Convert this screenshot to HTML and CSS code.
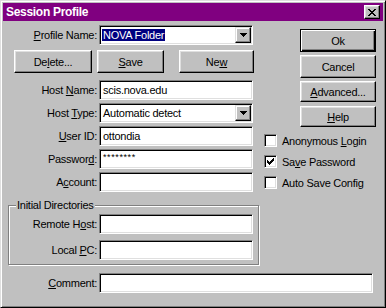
FILE: index.html
```html
<!DOCTYPE html>
<html lang="en">
<head>
    <meta charset="UTF-8">
    <meta name="viewport" content="width=device-width, initial-scale=1.0">
    <title>Session Profile</title>
    <link rel="stylesheet" href="styles.css">
</head>
<body>

    <div class="window">
        <div class="titlebar">
            <span class="title">Session Profile</span>
            <span class="close-btn">
                <svg width="8" height="7" viewBox="0 0 8 7" shape-rendering="crispEdges">
                    <path d="M0 0h2v1h-2z M6 0h2v1h-2z M1 1h2v1h-2z M5 1h2v1h-2z M2 2h4v1h-4z M3 3h2v1h-2z M2 4h4v1h-4z M1 5h2v1h-2z M5 5h2v1h-2z M0 6h2v1h-2z M6 6h2v1h-2z" fill="#000"/>
                </svg>
            </span>
        </div>

        <div class="content">
            <div class="main">
                <div class="left">
                    <div class="row row-profile">
                        <span class="lbl"><u>P</u>rofile Name:</span>
                        <div class="field combo">
                            <span class="field-text"><span class="selected">NOVA Folder</span></span>
                            <span class="drop-btn">
                                <svg width="7" height="4" viewBox="0 0 7 4" shape-rendering="crispEdges">
                                    <path d="M0 0h7v1h-7z M1 1h5v1h-5z M2 2h3v1h-3z M3 3h1v1h-1z" fill="#000"/>
                                </svg>
                            </span>
                        </div>
                    </div>

                    <div class="profile-buttons">
                        <div class="btn btn-delete">De<u>l</u>ete...</div>
                        <div class="btn btn-save"><u>S</u>ave</div>
                        <div class="btn btn-new">Ne<u>w</u></div>
                    </div>

                    <div class="row row-host">
                        <span class="lbl">Host <u>N</u>ame:</span>
                        <div class="field"><span class="field-text">scis.nova.edu</span></div>
                    </div>
                    <div class="row">
                        <span class="lbl">Host <u>T</u>ype:</span>
                        <div class="field combo">
                            <span class="field-text">Automatic detect</span>
                            <span class="drop-btn">
                                <svg width="7" height="4" viewBox="0 0 7 4" shape-rendering="crispEdges">
                                    <path d="M0 0h7v1h-7z M1 1h5v1h-5z M2 2h3v1h-3z M3 3h1v1h-1z" fill="#000"/>
                                </svg>
                            </span>
                        </div>
                    </div>
                    <div class="row">
                        <span class="lbl"><u>U</u>ser ID:</span>
                        <div class="field"><span class="field-text">ottondia</span></div>
                    </div>
                    <div class="row">
                        <span class="lbl">Passwor<u>d</u>:</span>
                        <div class="field field-password"><span class="field-text">********</span></div>
                    </div>
                    <div class="row">
                        <span class="lbl">A<u>c</u>count:</span>
                        <div class="field"></div>
                    </div>

                    <div class="group">
                        <span class="group-title">Initial Directories</span>
                        <div class="row row-remote">
                            <span class="lbl lbl-group">Remote H<u>o</u>st:</span>
                            <div class="field"></div>
                        </div>
                        <div class="row row-local">
                            <span class="lbl lbl-group">Local <u>P</u>C:</span>
                            <div class="field"></div>
                        </div>
                    </div>
                </div>

                <div class="right">
                    <div class="btn btn-side btn-default btn-ok">Ok</div>
                    <div class="btn btn-side btn-cancel">Cancel</div>
                    <div class="btn btn-side btn-advanced"><u>A</u>dvanced...</div>
                    <div class="btn btn-side btn-help"><u>H</u>elp</div>

                    <div class="check-row check-first">
                        <span class="checkbox"></span>
                        <span>Anonymous <u>L</u>ogin</span>
                    </div>
                    <div class="check-row">
                        <span class="checkbox">
                            <svg width="7" height="7" viewBox="0 0 7 7" shape-rendering="crispEdges">
                                <path d="M0 2h1v3h-1z M1 3h1v3h-1z M2 4h1v3h-1z M3 3h1v3h-1z M4 2h1v3h-1z M5 1h1v3h-1z M6 0h1v3h-1z" fill="#000"/>
                            </svg>
                        </span>
                        <span>Sa<u>v</u>e Password</span>
                    </div>
                    <div class="check-row">
                        <span class="checkbox"></span>
                        <span>Auto Save Config</span>
                    </div>
                </div>
            </div>

            <div class="row row-comment">
                <span class="lbl"><u>C</u>omment:</span>
                <div class="field field-comment"></div>
            </div>
        </div>
    </div>

</body>
</html>
```

FILE: styles.css
```css
body {
    margin: 0;
    padding: 0;
    font-family: 'Liberation Sans', Arial, sans-serif;
    font-size: 11px;
    letter-spacing: -0.25px;
    color: #000;
    background-color: #c0c0c0;
}

u {
    text-underline-offset: 1px;
}

.window {
    width: 386px;
    height: 308px;
    box-sizing: border-box;
    padding: 2px;
    background-color: #c0c0c0;
    border: 1px solid;
    border-color: #dfdfdf #000 #000 #dfdfdf;
    box-shadow: inset 1px 1px #fff, inset -1px -1px #808080;
}

/* title bar */

.titlebar {
    height: 18px;
    background-color: #800080;
    display: flex;
    align-items: center;
    justify-content: space-between;
    padding: 0 3px;
}

.title {
    color: #fff;
    font-weight: bold;
    font-size: 12px;
    letter-spacing: -0.3px;
}

.close-btn {
    width: 16px;
    height: 14px;
    box-sizing: border-box;
    background-color: #c0c0c0;
    border: 1px solid;
    border-color: #fff #000 #000 #fff;
    box-shadow: inset -1px -1px #808080, inset 1px 1px #dfdfdf;
    display: flex;
    align-items: center;
    justify-content: center;
}

/* form rows */

.main {
    display: flex;
}

.left {
    width: 256px;
}

.row {
    display: flex;
    align-items: center;
    height: 20px;
    margin-top: 3px;
}

.lbl {
    width: 96px;
    padding-right: 2px;
    box-sizing: border-box;
    text-align: right;
    white-space: nowrap;
}

.lbl-group {
    width: 90px;
}

.field {
    width: 154px;
    height: 20px;
    box-sizing: border-box;
    background-color: #fff;
    border: 1px solid;
    border-color: #808080 #fff #fff #808080;
    box-shadow: inset 1px 1px #000, inset -1px -1px #dfdfdf;
    display: flex;
    align-items: center;
    padding: 0 2px;
    white-space: nowrap;
}

.field-text {
    flex: 1;
    padding-left: 1px;
}

.combo {
    padding-right: 1px;
}

.selected {
    background-color: #000080;
    color: #fff;
    padding: 0 1px;
    margin-left: -1px;
}

.drop-btn {
    width: 16px;
    height: 16px;
    box-sizing: border-box;
    background-color: #c0c0c0;
    border: 1px solid;
    border-color: #dfdfdf #000 #000 #dfdfdf;
    box-shadow: inset -1px -1px #808080, inset 1px 1px #fff;
    display: flex;
    align-items: center;
    justify-content: center;
}

.field-password {
    align-items: flex-start;
    padding-top: 2px;
}

.field-password .field-text {
    font-size: 9px;
    letter-spacing: 0.6px;
}

.field-comment {
    width: 274px;
}

.row-profile {
    margin-top: 4px;
}

.row-host {
    margin-top: 7px;
}

/* buttons */

.btn {
    box-sizing: border-box;
    background-color: #c0c0c0;
    border: 1px solid;
    border-color: #fff #000 #000 #fff;
    box-shadow: inset -1px -1px #808080, inset 1px 1px #dfdfdf;
    display: flex;
    align-items: center;
    justify-content: center;
    height: 23px;
}

.btn-default {
    border-color: #000;
    box-shadow: inset 1px 1px #fff, inset -1px -1px #000, inset -2px -2px #808080;
}

.profile-buttons {
    display: flex;
    margin-top: 5px;
}

.btn-delete {
    margin-left: 11px;
    width: 78px;
}

.btn-save {
    margin-left: 5px;
    width: 67px;
}

.btn-new {
    margin-left: 15px;
    width: 75px;
}

.right {
    flex: 1;
    display: flex;
    flex-direction: column;
}

.btn-side {
    width: 76px;
    margin-left: 41px;
    margin-top: 3px;
}

.btn-ok {
    margin-top: 8px;
}

.btn-advanced,
.btn-help {
    height: 21px;
}

.btn-help {
    margin-top: 4px;
}

/* checkboxes */

.check-row {
    display: flex;
    align-items: center;
    gap: 5px;
    height: 21px;
    margin-left: 5px;
    white-space: nowrap;
}

.check-first {
    margin-top: 3px;
}

.checkbox {
    width: 13px;
    height: 13px;
    box-sizing: border-box;
    background-color: #fff;
    border: 1px solid;
    border-color: #808080 #fff #fff #808080;
    box-shadow: inset 1px 1px #000, inset -1px -1px #dfdfdf;
    display: flex;
    align-items: center;
    justify-content: center;
}

/* group box */

.group {
    position: relative;
    width: 251px;
    height: 60px;
    box-sizing: border-box;
    margin: 13px 0 0 5px;
    padding-top: 8px;
    border: 1px solid #808080;
    box-shadow: inset 1px 1px #fff, 1px 1px #fff;
}

.group-title {
    position: absolute;
    top: -7px;
    left: 7px;
    padding: 0 1px;
    line-height: 13px;
    background-color: #c0c0c0;
}

.row-remote {
    margin-top: 0;
}

.row-local {
    margin-top: 6px;
}

.row-comment {
    margin-top: 8px;
}
```
